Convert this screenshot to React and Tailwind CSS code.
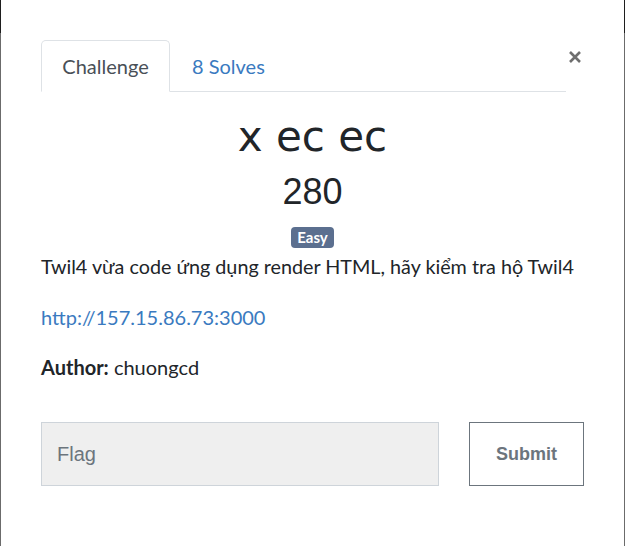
import React from "react";

export default function App() {
  return (
    <div className="relative w-[625px] h-[546px] bg-white overflow-hidden">
      {/* backdrop edges */}
      <div className="absolute left-0 top-0 w-px h-[33px] bg-[#1e1e1e]" />
      <div className="absolute left-0 top-[33px] w-px h-[513px] bg-[#6b6b6b]" />
      <div className="absolute right-0 top-0 w-px h-[33px] bg-[#1e1e1e]" />
      <div className="absolute right-0 top-[33px] w-px h-[513px] bg-[#6b6b6b]" />

      <button className="absolute left-[566px] top-[46px] w-[18px] h-[22px] flex items-center justify-center">
        <svg width="14" height="14" viewBox="0 0 14 14">
          <path d="M2 2 L12 12 M12 2 L2 12" stroke="#6e6e6e" strokeWidth="2.6" strokeLinecap="butt" />
        </svg>
      </button>

      <div className="pl-[41px] pr-[41px] pt-[40px] font-['Lato',sans-serif] text-[#212529]">
        <div className="flex border-b border-[#dee2e6] h-[52px] mr-[18px]">
          <div className="-mb-px h-[52px] w-[129px] border border-[#dee2e6] border-b-white rounded-t-[5px] bg-white flex items-center justify-center text-[20px] text-[#495057]">
            Challenge
          </div>
          <div className="h-[51px] flex items-center pl-[22px] text-[20px] text-[#3a7ac0]">
            8 Solves
          </div>
        </div>

        <div className="text-center mt-[22px] font-['DejaVu_Sans',sans-serif] text-[42px] leading-[46px] text-[#212529]">
          x ec ec
        </div>
        <div className="text-center mt-[9px] font-['Liberation_Sans',sans-serif] text-[36px] leading-[46px] text-[#212529]">
          280
        </div>
        <div className="flex justify-center mt-[12px]">
          <span className="inline-flex items-center h-[21px] px-[6px] rounded-[4px] bg-[#5b6f8f] text-white text-[15px] font-bold leading-none">
            Easy
          </span>
        </div>

        <p className="mt-[5px] text-[19.75px] leading-[28px] text-[#212529] whitespace-nowrap">
          Twil4 vừa code ứng dụng render HTML, hãy kiểm tra hộ Twil4
        </p>
        <p className="mt-[22px] text-[20px] leading-[28px] text-[#3a7ac0]">
          http://157.15.86.73:3000
        </p>
        <p className="mt-[22px] text-[20px] leading-[28px] text-[#212529]">
          <span className="font-bold">Author:</span> chuongcd
        </p>

        <div className="flex mt-[41px] justify-between items-stretch">
          <div className="shrink-0 w-[398px] h-[64px] bg-[#efefef] border border-[#ced4da] flex items-center px-[15px] font-['Liberation_Sans',sans-serif] text-[20px] text-[#6c757d]">
            Flag
          </div>
          <div className="shrink-0 w-[115px] h-[64px] border border-[#6c757d] flex items-center justify-center font-['Liberation_Sans',sans-serif] font-bold text-[18px] text-[#6c757d]">
            Submit
          </div>
        </div>
      </div>
    </div>
  );
}
